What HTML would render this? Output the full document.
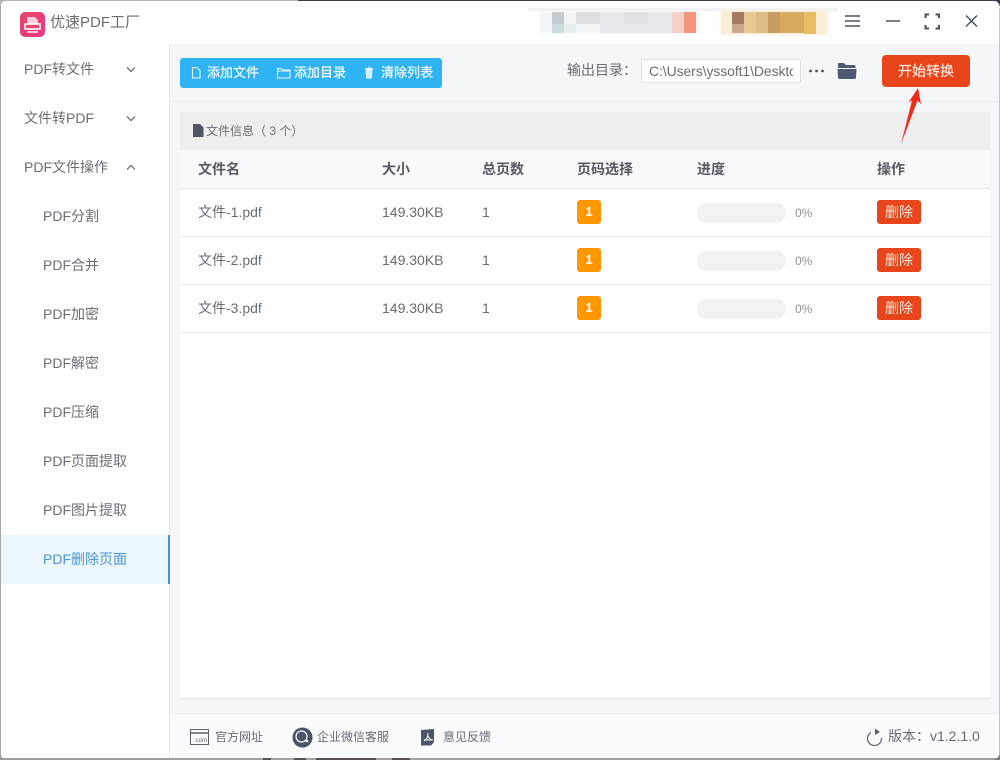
<!DOCTYPE html>
<html lang="zh">
<head>
<meta charset="utf-8">
<title>优速PDF工厂</title>
<style>
html,body{margin:0;padding:0;width:1000px;height:760px;overflow:hidden;background:#fff}
body{position:relative;font-family:"Liberation Sans","Noto Sans CJK SC",sans-serif;color:#606266}
.a{position:absolute}
.t{position:absolute;white-space:nowrap;line-height:20px}
#win{position:absolute;left:0;top:0;width:1000px;height:760px;background:#fff;overflow:hidden}
.nav{font-size:14px;color:#6a6e76;left:24px}
.sub{font-size:14px;color:#6a6e76;left:43px}
.hd{font-size:14px;font-weight:bold;color:#565a64}
.cell{font-size:14px;color:#686c74}
.line{position:absolute;left:180px;width:810px;height:1px;background:#e8eaec}
.badge{position:absolute;left:577px;width:24px;height:24px;background:#ff9800;border-radius:3px;color:#fff;font-size:13px;font-weight:bold;text-align:center;line-height:24px}
.bar{position:absolute;left:697px;width:89px;height:20px;background:#f1f2f3;border-radius:10px}
.pct{position:absolute;left:795px;font-size:12px;color:#8f9296;line-height:20px}
.del{position:absolute;left:877px;width:44px;height:24px;background:#e9451a;border-radius:3px;color:#fbe6de;font-size:14px;text-align:center;line-height:24px}
.foot{font-size:12px;color:#666b76}
</style>
</head>
<body>
<div id="win">
  <!-- window edge -->
  <div class="a" style="left:298px;top:0;width:702px;height:1px;background:#3a3d4d"></div>
  <div class="a" style="left:0;top:0;width:298px;height:1px;background:#b5b5b5"></div>
  <div class="a" style="left:0;top:0;width:1px;height:760px;background:#a8a8a8"></div>
  <div class="a" style="left:0;top:758px;width:1000px;height:2px;background:#a0a0a0"></div>
  <div class="a" style="left:999px;top:8px;width:1px;height:752px;background:#c4c6cc"></div>

  <!-- logo -->
  <svg class="a" style="left:20px;top:12px" width="25" height="25" viewBox="0 0 25 25">
    <defs><linearGradient id="lg" x1="0" y1="0" x2="1" y2="1"><stop offset="0" stop-color="#e8456a"/><stop offset="1" stop-color="#e93a86"/></linearGradient></defs>
    <rect width="25" height="25" rx="5" fill="url(#lg)"/>
    <path d="M7 5h8l3 3v4H7z" fill="#fff" opacity=".75"/>
    <rect x="4" y="11" width="17" height="7" rx="1" fill="#fff" opacity=".8"/>
    <rect x="6" y="13" width="13" height="3" fill="#e8456a"/>
    <rect x="7" y="19" width="11" height="2" fill="#fff" opacity=".7"/>
  </svg>
  <div class="t" style="left:50px;top:13px;font-size:15px;color:#6a6e73">优速PDF工厂</div>

  <!-- mosaic -->
  <div class="a" style="left:528px;top:8px;width:310px;height:3px;background:#eceef2;filter:blur(1px)"></div>
  <div class="a" style="left:540px;top:12px;width:160px;height:21px;background:#f3f4f6;filter:blur(1px)"></div>
  <div class="a" style="left:552px;top:12px;width:12px;height:12px;background:#c6cbcf"></div>
  <div class="a" style="left:552px;top:24px;width:12px;height:9px;background:#cbdcdd"></div>
  <div class="a" style="left:564px;top:24px;width:12px;height:9px;background:#e6eff1"></div>
  <div class="a" style="left:576px;top:12px;width:24px;height:12px;background:#dcdee2"></div>
  <div class="a" style="left:600px;top:12px;width:72px;height:21px;background:#e8e9ed"></div>
  <div class="a" style="left:624px;top:12px;width:24px;height:12px;background:#dfe1e5"></div>
  <div class="a" style="left:672px;top:12px;width:12px;height:21px;background:#f6d0ca"></div>
  <div class="a" style="left:684px;top:12px;width:12px;height:21px;background:#f6957e"></div>
  <div class="a" style="left:720px;top:10px;width:108px;height:25px;background:#fbeed8;border-radius:3px;filter:blur(1px)"></div>
  <div class="a" style="left:732px;top:12px;width:12px;height:12px;background:#a57a62"></div>
  <div class="a" style="left:732px;top:24px;width:12px;height:9px;background:#c9a88e"></div>
  <div class="a" style="left:744px;top:12px;width:12px;height:21px;background:#e8c993"></div>
  <div class="a" style="left:756px;top:12px;width:12px;height:21px;background:#dcbd86"></div>
  <div class="a" style="left:768px;top:12px;width:12px;height:21px;background:#c89d63"></div>
  <div class="a" style="left:780px;top:12px;width:24px;height:21px;background:#d8a95f"></div>
  <div class="a" style="left:804px;top:12px;width:12px;height:22px;background:#e8bc65"></div>

  <!-- window controls -->
  <svg class="a" style="left:840px;top:10px" width="150" height="24" viewBox="840 10 150 24" fill="none" stroke="#4c5260" stroke-width="1.500">
    <path d="M845 16h15M845 21h15M845 26h15"/>
    <path d="M886 21h14"/>
    <path d="M925.500 18v-3.500h3.500M935.500 14.500h3.500v3.500M939 25v3.500h-3.500M929 28.500h-3.500V25" stroke-width="2"/>
    <path d="M966 15.500l11 11M977 15.500l-11 11" stroke-width="1.500"/>
  </svg>

  <!-- sidebar -->
  <div class="a" style="left:169px;top:44px;width:1px;height:714px;background:#e6e8ea"></div>
  <div class="t nav" style="top:59px">PDF转文件</div>
  <div class="t nav" style="top:108px">文件转PDF</div>
  <div class="t nav" style="top:157px">PDF文件操作</div>
  <svg class="a" style="left:125px;top:64px" width="12" height="110" viewBox="0 0 12 110" fill="none" stroke="#5f6470" stroke-width="1.200">
    <path d="M2 3.500l4 4 4-4M2 52.500l4 4 4-4M2 105.500l4-4 4 4"/>
  </svg>
  <div class="t sub" style="top:206px">PDF分割</div>
  <div class="t sub" style="top:255px">PDF合并</div>
  <div class="t sub" style="top:304px">PDF加密</div>
  <div class="t sub" style="top:353px">PDF解密</div>
  <div class="t sub" style="top:402px">PDF压缩</div>
  <div class="t sub" style="top:451px">PDF页面提取</div>
  <div class="t sub" style="top:500px">PDF图片提取</div>
  <div class="a" style="left:1px;top:535px;width:169px;height:49px;background:#ecf7fe"></div>
  <div class="a" style="left:168px;top:535px;width:2px;height:49px;background:#4a8fd8"></div>
  <div class="t sub" style="top:549px;color:#4a95d2">PDF删除页面</div>

  <!-- content bg -->
  <div class="a" style="left:170px;top:44px;width:829px;height:714px;background:#f5f6f8"></div>
  <div class="a" style="left:170px;top:101px;width:829px;height:1px;background:#eef0f2"></div>
  <div class="a" style="left:170px;top:713px;width:829px;height:1px;background:#eceef0"></div>
  <div class="a" style="left:170px;top:714px;width:829px;height:44px;background:#fafbfc"></div>

  <!-- toolbar -->
  <div class="a" style="left:180px;top:58px;width:262px;height:30px;background:#2fb3f3;border-radius:3px"></div>
  <svg class="a" style="left:180px;top:58px" width="262" height="30" viewBox="0 0 262 30" fill="none" stroke="#eaf7fe" stroke-width="1.100">
    <path d="M12.500 9.500h4.500l3 3v7.500h-7.500z"/>
    <path d="M97.500 10.500h4l1.500 1.500h7v8h-12.500zM97.500 13h12.500"/>
    <path d="M186 11.500h6l-.6 8.500h-4.800zM185 10.500h8M188 9h2" fill="#cfeefd" stroke-width=".9"/>
  </svg>
  <div class="t" style="left:207px;top:63px;font-size:13px;color:#f2faff;-webkit-text-stroke:.25px #f2faff">添加文件</div>
  <div class="t" style="left:294px;top:63px;font-size:13px;color:#f2faff;-webkit-text-stroke:.25px #f2faff">添加目录</div>
  <div class="t" style="left:381px;top:63px;font-size:13px;color:#f2faff;-webkit-text-stroke:.25px #f2faff">清除列表</div>

  <div class="t" style="left:567px;top:60px;font-size:14px;color:#686c74">输出目录：</div>
  <div class="a" style="left:641px;top:59px;width:160px;height:24px;box-sizing:border-box;background:#fff;border:1px solid #dfe2e6;border-radius:2px"></div>
  <div class="a" style="left:649px;top:60px;width:144px;height:22px;overflow:hidden;font-size:14px;color:#686c74;line-height:22px;white-space:nowrap;letter-spacing:-.1px">C:\Users\yssoft1\Desktop</div>
  <svg class="a" style="left:808px;top:66px" width="18" height="10" viewBox="0 0 18 10" fill="#4c5260">
    <circle cx="2.500" cy="5" r="1.400"/><circle cx="8.500" cy="5" r="1.400"/><circle cx="14.500" cy="5" r="1.400"/>
  </svg>
  <svg class="a" style="left:836px;top:62px" width="22" height="18" viewBox="0 0 22 18" fill="#4f5a72">
    <path d="M3 1h5l2 2h8a1.500 1.500 0 0 1 1.500 1.500V6H2V2a1 1 0 0 1 1-1z"/>
    <path d="M1.500 7h19l-.5 8.500a1.500 1.500 0 0 1-1.500 1.500h-15A1.500 1.500 0 0 1 2 15.500z"/>
  </svg>
  <div class="a" style="left:882px;top:55px;width:88px;height:32px;background:#e9451a;border-radius:4px;color:#fde9e2;font-size:14px;text-align:center;line-height:32px;-webkit-text-stroke:.2px #fde9e2">开始转换</div>

  <!-- table -->
  <div class="a" style="left:180px;top:112px;width:810px;height:38px;background:#eeeeee"></div>
  <svg class="a" style="left:193px;top:124px" width="11" height="13" viewBox="0 0 11 13" fill="#4f5565">
    <path d="M0 0h7l3.500 3.500V13H0z"/>
  </svg>
  <div class="t" style="left:206px;top:121px;font-size:12px;color:#686c74">文件信息（ 3 个）</div>
  <div class="a" style="left:180px;top:150px;width:810px;height:548px;background:#fff"></div>
  <div class="a" style="left:180px;top:150px;width:810px;height:38px;background:#f8f9fa"></div>
  <div class="line" style="top:188px"></div>
  <div class="line" style="top:236px"></div>
  <div class="line" style="top:284px"></div>
  <div class="line" style="top:332px"></div>
  <div class="line" style="top:698px;background:#dfe1e3"></div>

  <div class="t hd" style="left:198px;top:159px">文件名</div>
  <div class="t hd" style="left:382px;top:159px">大小</div>
  <div class="t hd" style="left:482px;top:159px">总页数</div>
  <div class="t hd" style="left:577px;top:159px">页码选择</div>
  <div class="t hd" style="left:697px;top:159px">进度</div>
  <div class="t hd" style="left:877px;top:159px">操作</div>

  <div class="t cell" style="left:198px;top:202px">文件-1.pdf</div>
  <div class="t cell" style="left:382px;top:202px">149.30KB</div>
  <div class="t cell" style="left:482px;top:202px">1</div>
  <div class="badge" style="top:200px">1</div>
  <div class="bar" style="top:203px"></div>
  <div class="pct" style="top:203px">0%</div>
  <div class="del" style="top:200px">删除</div>

  <div class="t cell" style="left:198px;top:250px">文件-2.pdf</div>
  <div class="t cell" style="left:382px;top:250px">149.30KB</div>
  <div class="t cell" style="left:482px;top:250px">1</div>
  <div class="badge" style="top:248px">1</div>
  <div class="bar" style="top:251px"></div>
  <div class="pct" style="top:251px">0%</div>
  <div class="del" style="top:248px">删除</div>

  <div class="t cell" style="left:198px;top:298px">文件-3.pdf</div>
  <div class="t cell" style="left:382px;top:298px">149.30KB</div>
  <div class="t cell" style="left:482px;top:298px">1</div>
  <div class="badge" style="top:296px">1</div>
  <div class="bar" style="top:299px"></div>
  <div class="pct" style="top:299px">0%</div>
  <div class="del" style="top:296px">删除</div>

  <!-- red annotation arrow (above the table) -->
  <svg class="a" style="left:0;top:0" width="1000" height="160" viewBox="0 0 1000 160">
    <path d="M901 144L912 100.500L908.500 102.500L918 88L921 104L917.500 100.500Z" fill="#ee2a1a"/>
  </svg>

  <!-- footer -->
  <svg class="a" style="left:190px;top:729px" width="20" height="17" viewBox="0 0 20 17" fill="none" stroke="#5a6070">
    <rect x=".5" y=".5" width="18" height="15"/>
    <path d="M1 4h17" stroke-width="1.500"/>
    <text x="4" y="13" font-size="6" fill="#5a6070" stroke="none" font-family="Liberation Sans">.com</text>
  </svg>
  <div class="t foot" style="left:215px;top:727px">官方网址</div>
  <svg class="a" style="left:292px;top:727px" width="21" height="21" viewBox="0 0 21 21">
    <circle cx="10.500" cy="10.500" r="10" fill="#4b5468"/>
    <circle cx="9.500" cy="9.500" r="5.500" fill="none" stroke="#fff" stroke-width="1.200"/>
    <circle cx="15" cy="14" r="1.300" fill="#fff"/>
  </svg>
  <div class="t foot" style="left:317px;top:727px">企业微信客服</div>
  <svg class="a" style="left:421px;top:729px" width="15" height="17" viewBox="0 0 15 17">
    <path d="M0 1l13-1v13l-3 3.500H0z" fill="#4b5468"/>
    <path d="M7 4c0 4-1 6-4 8M7 7c1 2 2 4 5 4M3 11h8" fill="none" stroke="#fff" stroke-width="1"/>
  </svg>
  <div class="t foot" style="left:443px;top:727px">意见反馈</div>
  <svg class="a" style="left:866px;top:728px" width="18" height="18" viewBox="0 0 18 18" fill="none" stroke="#5a6070" stroke-width="1.200">
    <path d="M5 4.500A7 7 0 1 0 15.500 10"/>
    <path d="M9 .5l5 3.500-5 3z" fill="#5a6070" stroke="none"/>
  </svg>
  <div class="t" style="left:888px;top:726px;font-size:14px;color:#666b76">版本：v1.2.1.0</div>

  <!-- rounded window corners and desktop fragments -->
  <svg class="a" style="left:0;top:0" width="1000" height="760" viewBox="0 0 1000 760" fill="none">
    <path d="M992 0H1000V8A8 8 0 0 0 992 0Z" fill="#3a3d4d"/>
    <path d="M0 752V760H8A8 8 0 0 1 0 752Z" fill="#9a9a9a"/>
    <path d="M1000 752V760H992A8 8 0 0 0 1000 752Z" fill="#7a7a7a"/>
    <path d="M0 8V0H8A8 8 0 0 0 0 8Z" fill="#b5b5b5"/>
    <path d="M263 759h8M294 759h12M316 759h60M392 759h18" stroke="#55505a" stroke-width="2"/>
  </svg>
</div>
</body>
</html>
